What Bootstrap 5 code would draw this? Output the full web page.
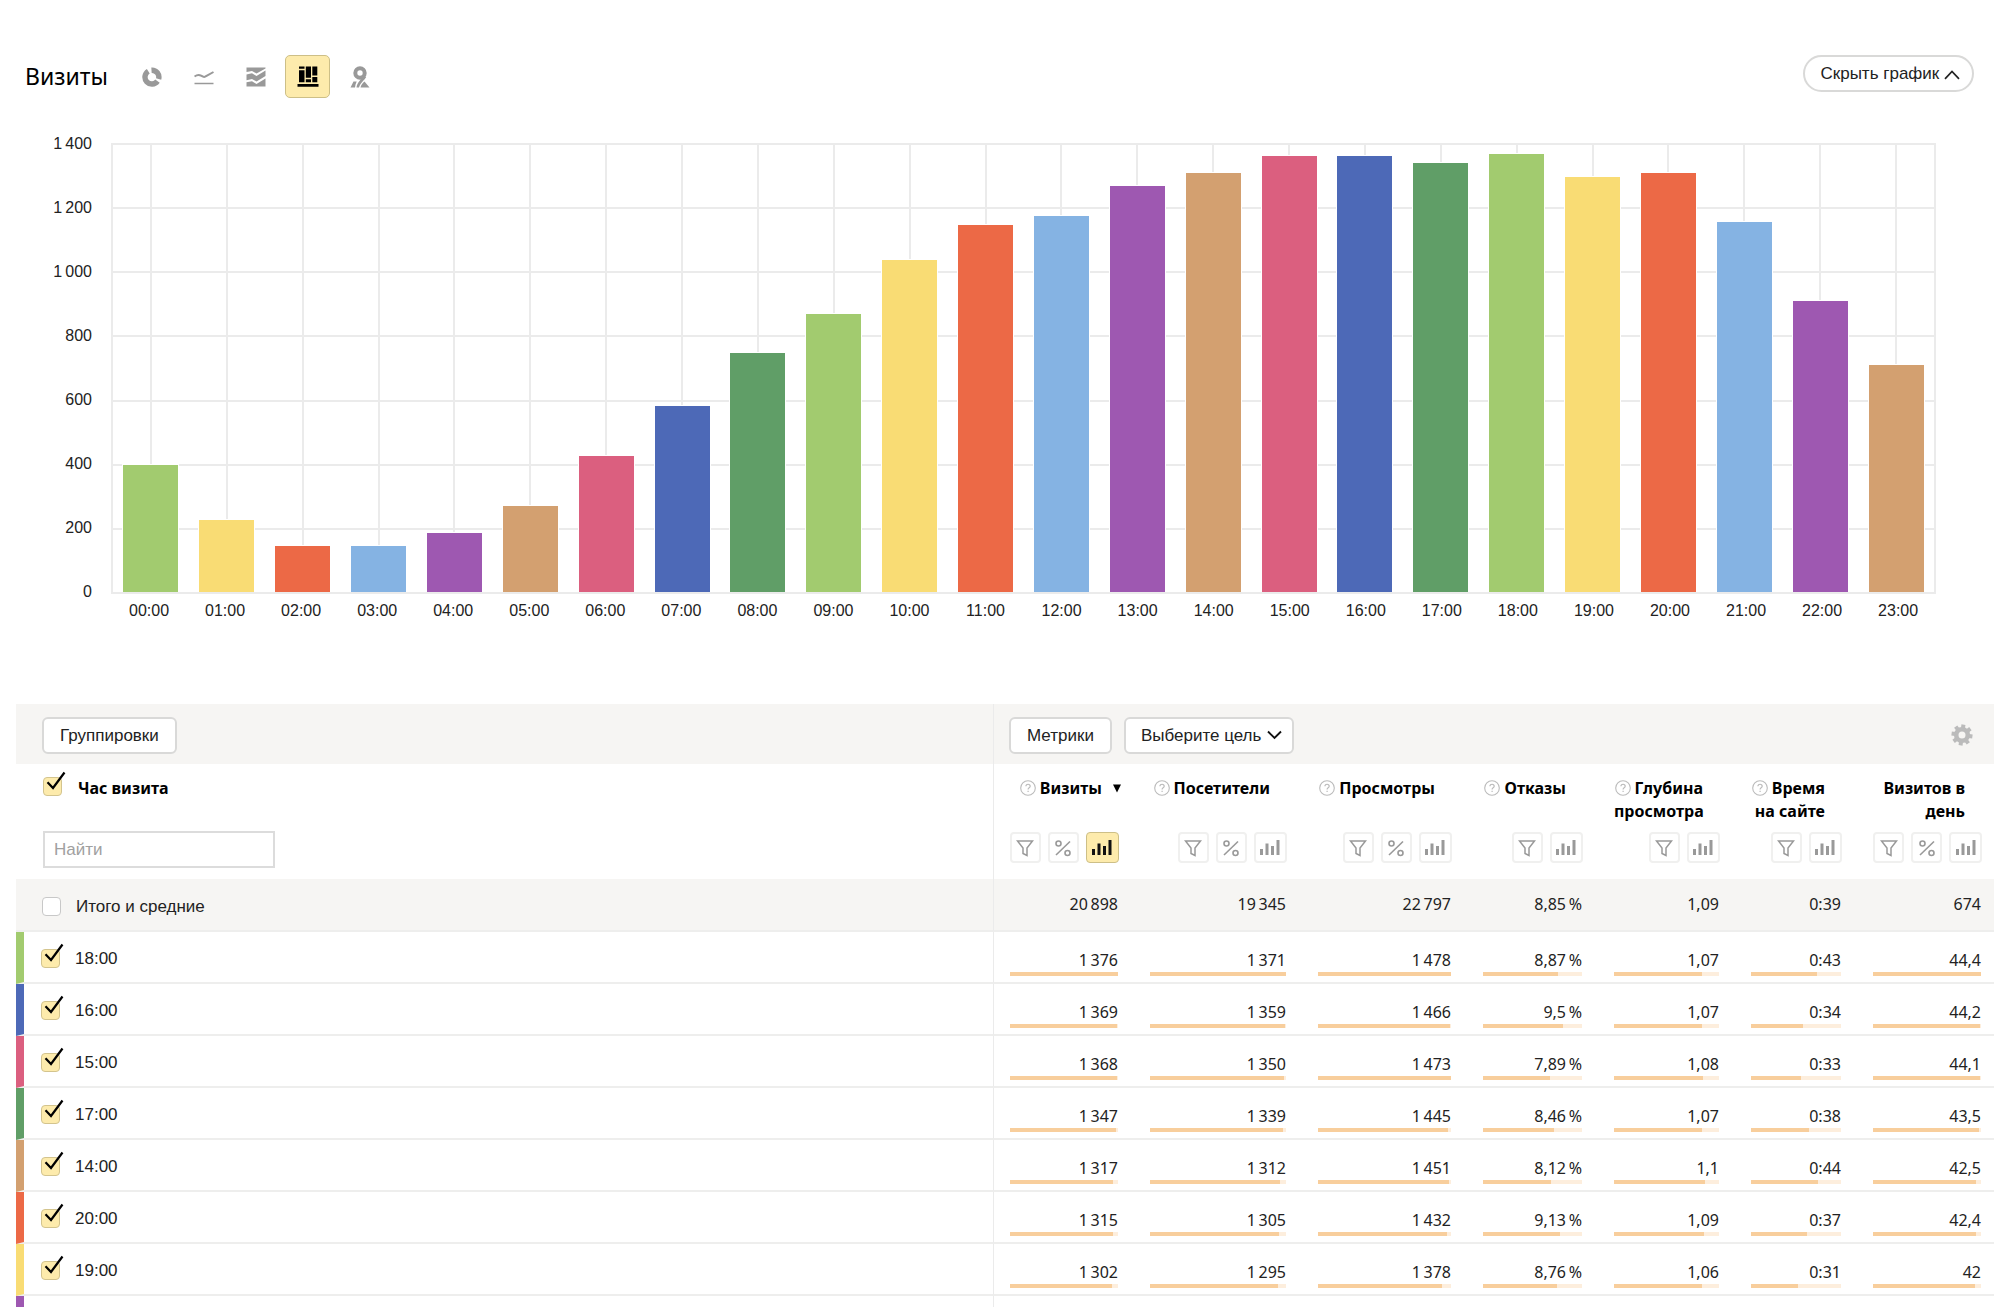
<!DOCTYPE html>
<html lang="ru">
<head>
<meta charset="utf-8">
<meta name="viewport" content="width=device-width, initial-scale=1">
<title>Визиты</title>
<link href="https://cdn.jsdelivr.net/npm/bootstrap@5.3.0/dist/css/bootstrap.min.css" rel="stylesheet">
<style>
  :root { --ui: "Liberation Sans", Arial, sans-serif; --txt: "Noto Sans", "Open Sans", sans-serif; --sel: #fdebac; --sel-line: #cdbf87; --line: #ebebeb; --band: #f6f5f3; }
  body { font-family: var(--ui); font-size: 16px; color: #222; background: #fff; }
  .report-head { padding: 55px 30px 0 25px; }
  .report-title { font-family: var(--txt); font-size: 23px; line-height: 43px; width: 104px; color: #000; }
  .view-btns { gap: 7px; }
  .view-btn { width: 45px; height: 43px; padding: 0; border: 1px solid transparent; border-radius: 5px; color: #999; line-height: 1; }
  .view-btn.active { background: var(--sel); border-color: var(--sel-line); color: #000; }
  .ui-btn { height: 37px; padding: 0 16px; border: 2px solid #d9d9d8; border-radius: 6px; background: #fff; color: #222; font-size: 17px; line-height: 33px; }
  .ui-btn:hover { border-color: #bbb; background: #fff; }
  .pill-btn { border-radius: 19px; padding: 0 12px 0 15px; }
  .goal-pick { width: 170px; appearance: none; padding: 0 30px 0 15px; }
  .goal-wrap svg { position: absolute; right: 12px; top: 13px; pointer-events: none; }

  .chart { padding: 34px 68px 0 0; }
  .y-axis { width: 92px; height: 472px; margin-right: 19px; }
  .y-axis div, .x-axis div { line-height: 24px; }
  .plot { height: 451px; margin-top: 11px; border: 2px solid var(--line); }
  .plot-rows { position: absolute; inset: 0; }
  .plot-rows div + div { border-top: 2px solid var(--line); }
  .x-axis { margin: 5px 0 0; }
  .slot, .x-axis div { flex: 1 1 0; min-width: 0; }
  .slot { position: relative; background: linear-gradient(var(--line), var(--line)) center / 2px 100% no-repeat; }
  .vbar { width: 75%; border: 1px solid #fff; border-bottom: 0; }

  .data-wrap { margin: 81px 10px 0 16px; }
  .data-grid { width: 100%; table-layout: fixed; border-collapse: separate; border-spacing: 0; }
  .data-grid th, .data-grid td { padding: 0 16px; vertical-align: top; }
  .data-grid tr > :first-child { border-right: 1px solid var(--line); padding-left: 27px; }
  .data-grid tr > :last-child { padding-right: 13px; }
  .data-grid .band-row td { background: var(--band); height: 60px; vertical-align: middle; padding-top: 2px; }
  .data-grid tr > .left-band { padding-left: 26px; }
  .data-grid .band-row td + td { padding-left: 15px; }
  .data-grid .head-row th { height: 115px; font-family: var(--txt); font-size: 16px; line-height: 23px; padding-top: 13px; color: #000; }
  .head-text { height: 55px; padding-right: 16px; }
  .main-label { height: 54px; gap: 16px; }
  .tool-btns { gap: 7px; margin-right: -1px; }
  .tool-btn { width: 31px; height: 31px; padding: 0; border: 2px solid #f0f0ef; border-radius: 4px; color: #999; line-height: 1; display: flex; align-items: center; justify-content: center; }
  .tool-btn:last-child { width: 33px; }
  .tool-btn.active { background: var(--sel); border: 1px solid var(--sel-line); color: #111; }
  .find-box { width: 232px; height: 37px; padding: 0 9px; border: 2px solid #dcdcdc; border-radius: 0; font: 400 17px/33px var(--ui); }
  .find-box::placeholder { color: #a0a0a0; }
  .data-grid .item-row td { height: 52px; border-bottom: 2px solid #eeeeed; }
  .data-grid .total-row td { height: 53px; border-bottom: 2px solid #eeeeed; background: var(--band); }
  .data-grid .total-row .num-cell { padding-top: 13px; }
  .data-grid .item-row > :first-child { border-left: 8px solid var(--tone); padding-left: 17px; }
  .num-cell { font-family: var(--txt); text-align: right; line-height: 24px; color: #222; }
  .data-grid .item-row .num-cell { padding-top: 16px; }
  .row-name { font-size: 17px; line-height: 47px; padding-top: 3px; gap: 15px; }
  .total-row .row-name { padding-top: 4px; }
  .meter-track { height: 4px; background: #fdeedd; }
  .meter-track div { height: 4px; background: #f8ce9c; }
  .data-grid .stub-row td { height: 11px; border-bottom: 0; }
  .tick-box { position: relative; width: 19px; height: 19px; flex: none; }
  .tick-box input { appearance: none; display: block; width: 19px; height: 19px; margin: 0; border: 1px solid #c8c8c8; border-radius: 4px; background: #fff; }
  .tick-box input:checked { background: var(--sel); border-color: #d3c48e; }
  .tick-box svg { position: absolute; left: 3px; top: -7px; pointer-events: none; display: none; }
  .tick-box input:checked + svg { display: block; }
  svg { vertical-align: middle; }
  .help-dot { margin: -4px 4px 0 0; color: #bbb; }
  .sort-mark { position: absolute; right: -3px; top: 7px; }
</style>
<script src="https://cdn.jsdelivr.net/npm/bootstrap@5.3.0/dist/js/bootstrap.bundle.min.js"></script>
</head>
<body>

<svg width="0" height="0" class="position-absolute" aria-hidden="true">
  <symbol id="i-funnel" viewBox="0 0 18 18"><path d="M1.5 2h15l-5.500 7v7.500l-4-2V9z" fill="none" stroke="currentColor" stroke-width="1.500"/></symbol>
  <symbol id="i-percent" viewBox="0 0 18 18"><g fill="none" stroke="currentColor" stroke-width="1.600"><circle cx="4.500" cy="4.500" r="2.500"/><circle cx="13.500" cy="14" r="2.500"/><path d="M16 2.500L2 16"/></g></symbol>
  <symbol id="i-bars" viewBox="0 0 20 16"><path d="M0 9h3v6H0zM5.500 3.500h3V15h-3zM11 6h3v9h-3zM16.500 0h3v15h-3z" fill="currentColor"/></symbol>
  <symbol id="i-help" viewBox="0 0 16 16"><circle cx="8" cy="8" r="7.300" fill="none" stroke="currentColor" stroke-width="1.100"/><path d="M5.900 6.300c0-2.800 4.300-2.700 4.300 0 0 1.600-2.100 1.500-2.100 3.200M8.100 10.800v1.300" fill="none" stroke="currentColor" stroke-width="1.200"/></symbol>
  <symbol id="i-tick" viewBox="0 0 20 20"><path d="M1.500 12.300L7 18 18.500 2.500" fill="none" stroke="#000" stroke-width="2.200"/></symbol>
</svg>

<header class="report-head d-flex align-items-start">
  <h1 class="report-title m-0 fw-normal">Визиты</h1>
  <div class="view-btns d-flex" role="group" aria-label="Вид графика">
    <button class="btn view-btn" type="button" aria-label="Круговая диаграмма">
      <svg width="20" height="20" viewBox="0 0 20 20" fill="none" stroke="currentColor" stroke-width="5.400"><path d="M9.500 3.200A6.900 6.900 0 0 1 16.600 12"/><path d="M15.500 14.100A6.900 6.900 0 1 1 6.300 4.200"/></svg>
    </button>
    <button class="btn view-btn" type="button" aria-label="Линии">
      <svg width="20" height="20" viewBox="0 0 20 20" fill="none" stroke="currentColor"><path d="M.500 9.500c3-2 4.500-2 6.500-.8 3 1.800 3.500 1.600 6 0L19.500 5" stroke-width="2"/><path d="M.500 16.500h19" stroke-width="1.500"/></svg>
    </button>
    <button class="btn view-btn" type="button" aria-label="Области">
      <svg width="20" height="20" viewBox="0 0 20 20" fill="currentColor"><path d="M.500.500h19v1L10.500 6.500l-4.500-2.500-5.500 1zM.500 7.500L6 6.200l4.500 2.800 9-5.500v5.500l-9 5.500L6 12l-5.500 1.200zM.500 15.300L6 14.200l4.500 2.800 9-5.500v8H.500z"/></svg>
    </button>
    <button class="btn view-btn active" type="button" aria-label="Столбцы">
      <svg width="22" height="22" viewBox="0 0 22 22" fill="currentColor"><path d="M2 .500h5.500v2.300H2zM2 4.300h5.500v12H2zM8.800.500H14v11.300H8.800zM8.800 13.300H14v3H8.800zM15.300.500h5v9h-5zM15.300 11h5v5.300h-5zM.500 18h21v2.700H.500z"/></svg>
    </button>
    <button class="btn view-btn" type="button" aria-label="Карта">
      <svg width="20" height="22" viewBox="0 0 20 22"><circle cx="10" cy="7" r="4.700" fill="none" stroke="currentColor" stroke-width="4"/><path d="M12 11h4.200c-2 3.500-5.700 5.500-7.200 10.500H6.500c.500-4.500 3.500-6.500 5.500-10.500zM3.500 15.500h3.200c-1 2-1.500 4-1.700 6H.500zM14.500 15.500l5 6h-9c.500-2.500 2-4.500 4-6z" fill="currentColor"/></svg>
    </button>
  </div>
  <button class="btn ui-btn pill-btn ms-auto" type="button">Скрыть график <svg width="16" height="10" viewBox="0 0 16 10" fill="none" stroke="#222" stroke-width="1.700"><path d="M1 8.800L8 1.500l7 7.300"/></svg></button>
</header>

<section class="chart d-flex" aria-label="Визиты по часам">
  <div class="y-axis d-flex flex-column justify-content-between text-end">
    <div>1&#8201;400</div><div>1&#8201;200</div><div>1&#8201;000</div><div>800</div><div>600</div><div>400</div><div>200</div><div>0</div>
  </div>
  <div class="flex-grow-1">
    <div class="plot position-relative d-flex">
      <div class="plot-rows d-flex flex-column">
        <div class="flex-fill"></div><div class="flex-fill"></div><div class="flex-fill"></div><div class="flex-fill"></div><div class="flex-fill"></div><div class="flex-fill"></div><div class="flex-fill"></div>
      </div>
      <div class="d-flex flex-grow-1" id="bars"></div>
    </div>
    <div class="x-axis d-flex text-center" id="hours"></div>
  </div>
</section>

<main class="data-wrap">
  <table class="data-grid">
    <colgroup><col><col style="width:140px"><col style="width:168px"><col style="width:165px"><col style="width:131px"><col style="width:137px"><col style="width:122px"><col style="width:137px"></colgroup>
    <thead>
      <tr class="band-row">
        <td class="left-band"><button class="btn ui-btn" type="button">Группировки</button></td>
        <td colspan="7">
          <div class="d-flex align-items-center">
            <button class="btn ui-btn me-2" type="button">Метрики</button>
            <div class="goal-wrap position-relative ms-1">
              <select class="ui-btn goal-pick" aria-label="Цель"><option>Выберите цель</option></select>
              <svg width="15" height="10" viewBox="0 0 15 10" fill="none" stroke="#111" stroke-width="1.900"><path d="M1 1.500l6.500 6.500L14 1.500"/></svg>
            </div>
            <button class="btn p-0 border-0 ms-auto me-2 lh-1" type="button" aria-label="Настройки"><svg width="22" height="22" viewBox="-11 -11 22 22"><circle r="5.800" fill="none" stroke="#bbb" stroke-width="4.600"/><g stroke="#bbb" stroke-width="4"><path d="M0-10.500V-7M0 10.500V7M-10.500 0H-7M10.500 0H7" transform="rotate(8)"/><path d="M0-10.500V-7M0 10.500V7M-10.500 0H-7M10.500 0H7" transform="rotate(53)"/></g></svg></button>
          </div>
        </td>
      </tr>
      <tr class="head-row" id="heads">
        <th scope="col">
          <label class="main-label d-flex"><span class="tick-box"><input type="checkbox" checked><svg width="20" height="20"><use href="#i-tick"/></svg></span><span>Час визита</span></label>
          <input class="find-box d-block" type="text" placeholder="Найти" aria-label="Найти">
        </th>
      </tr>
    </thead>
    <tbody id="rows"></tbody>
  </table>
</main>

<script>
const tones = { green:'#a2cb6f', yellow:'#f9dc74', red:'#ec6946', blue:'#85b3e3', purple:'#9e58b1', tan:'#d3a070', pink:'#db5f7f', navy:'#4d69b7', forest:'#609e67' };
const order = ['green','yellow','red','blue','purple','tan','pink','navy','forest'];
const visits = [400,230,148,148,188,272,429,586,753,873,1043,1154,1182,1274,1317,1368,1369,1347,1376,1302,1315,1162,914,713];
const hour = h => String(h).padStart(2, '0') + ':00';
const toneOf = h => tones[order[h % 9]];

document.getElementById('bars').innerHTML = visits.map((v, h) =>
  `<div class="slot d-flex align-items-end justify-content-center"><div class="vbar" style="height:${(v / 14).toFixed(2)}%;background:${toneOf(h)}"></div></div>`).join('');
document.getElementById('hours').innerHTML = visits.map((v, h) => `<div>${hour(h)}</div>`).join('');

const icon = (id, w, h) => `<svg width="${w}" height="${h}"><use href="#i-${id}"/></svg>`;
const tool = (id, name, w, h, on) => `<button type="button" class="btn tool-btn${on ? ' active' : ''}" aria-label="${name}">${icon(id, w, h)}</button>`;
const columns = [
  { t: 'Визиты', help: 1, pct: 1, on: 1 }, { t: 'Посетители', help: 1, pct: 1 }, { t: 'Просмотры', help: 1, pct: 1 },
  { t: 'Отказы', help: 1 }, { t: 'Глубина<br>просмотра', help: 1 }, { t: 'Время<br>на сайте', help: 1 }, { t: 'Визитов в<br>день', pct: 1 }
];
document.getElementById('heads').insertAdjacentHTML('beforeend', columns.map(c => `<th scope="col">
  <div class="head-text position-relative text-nowrap text-end">${c.help ? '<svg class="help-dot" width="16" height="16"><use href="#i-help"/></svg>' : ''}${c.t}${c.on ? '<svg class="sort-mark" width="8" height="9"><path d="M0 .5h8L4 8.500z"/></svg>' : ''}</div>
  <div class="tool-btns d-flex justify-content-end">${tool('funnel', 'Фильтр', 18, 18)}${c.pct ? tool('percent', 'Проценты', 18, 18) : ''}${tool('bars', 'График', 20, 16, c.on)}</div></th>`).join(''));

const thin = '\u2009';
const tickBox = on => `<span class="tick-box"><input type="checkbox"${on ? ' checked' : ''}>${icon('tick', 20, 20)}</span>`;
const grouped = n => n > 999 ? Math.floor(n / 1000) + thin + String(n % 1000).padStart(3, '0') : n;
const comma = n => String(n).replace('.', ',');
const tops = [1376, 1371, 1478, 11.73, 1.27, 59, 44.4];
const show = (v, i) => i < 3 ? grouped(v) : i === 3 ? comma(v) + thin + '%' : i === 5 ? '0:' + v : comma(v);
const total = [20898, 19345, 22797, 8.85, 1.09, 39, 674];
const items = [
  [18, 1376, 1371, 1478, 8.87, 1.07, 43, 44.4],
  [16, 1369, 1359, 1466, 9.5, 1.07, 34, 44.2],
  [15, 1368, 1350, 1473, 7.89, 1.08, 33, 44.1],
  [17, 1347, 1339, 1445, 8.46, 1.07, 38, 43.5],
  [14, 1317, 1312, 1451, 8.12, 1.1, 44, 42.5],
  [20, 1315, 1305, 1432, 9.13, 1.09, 37, 42.4],
  [19, 1302, 1295, 1378, 8.76, 1.06, 31, 42]
];
document.getElementById('rows').innerHTML =
  `<tr class="total-row"><td class="left-band"><label class="row-name d-flex align-items-center">${tickBox(false)}Итого и средние</label></td>${total.map((v, i) => `<td class="num-cell">${show(v, i)}</td>`).join('')}</tr>` +
  items.map(([h, ...vals]) => `<tr class="item-row" style="--tone:${toneOf(h)}"><td><label class="row-name d-flex align-items-center">${tickBox(true)}${hour(h)}</label></td>` +
    vals.map((v, i) => `<td class="num-cell">${show(v, i)}<div class="meter-track"><div style="width:${(v / tops[i] * 100).toFixed(1)}%"></div></div></td>`).join('') + '</tr>').join('') +
  `<tr class="item-row stub-row" style="--tone:${toneOf(13)}"><td></td><td colspan="7"></td></tr>`;
</script>
</body>
</html>
